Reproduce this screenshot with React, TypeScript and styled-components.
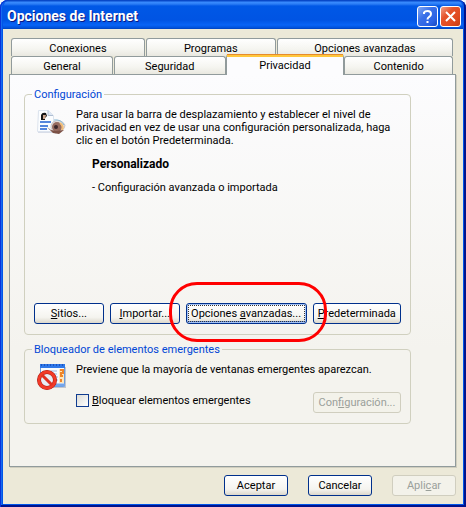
import React, { useState } from "react";
import styled, { createGlobalStyle, css } from "styled-components";

const Global = createGlobalStyle`
  *, *::before, *::after { box-sizing: border-box; }
  body { margin: 0; background: #f4f6fb; font: 11px/13px Roboto, "Liberation Sans", Arial, sans-serif; color: #000; }
  button, input { font: inherit; color: inherit; }
  p, h1, h2 { margin: 0; font-size: inherit; }
`;

const Dialog = styled.main`
  display: flex;
  flex-direction: column;
  min-height: 100vh;
  padding: 0 3px 3px;
  border-radius: 8px 8px 0 0;
  background: #0055e8;
  box-shadow: inset 1px 0 #0831d9, inset -2px -2px #00138c, inset 0 1px #0a3fc4, inset 2px 0 #166aee;
`;

const TitleBar = styled.header`
  display: flex;
  align-items: center;
  gap: 2px;
  height: 29px;
  padding: 3px 2px 0 4px;
  background: linear-gradient(#0848c8 0, #0848c8 1px, #3a8cff 2px, #2b7df5 4px, #0058e6 6px, #0054e3 20px, #0864f6 25px, #0050d8 28px, #0040b8);
  border-radius: 8px 8px 0 0;
`;

const Title = styled.h1`
  flex: 1;
  font: bold 14px/18px Roboto, sans-serif;
  color: #fff;
  text-shadow: 1px 1px #0a1883;
`;

const CaptionButton = styled.button<{ $close?: boolean }>`
  display: grid;
  place-items: center;
  width: 21px;
  height: 21px;
  padding: 0;
  border: 1px solid #fff;
  border-radius: 3px;
  background: ${(p) =>
    p.$close
      ? "linear-gradient(135deg, #f0a08a, #e5532b 35%, #e04a20 70%, #c63c12)"
      : "linear-gradient(135deg, #82a8f4, #3a70e8 40%, #2c62e4 75%, #1748c0)"};
`;

const Content = styled.div`
  flex: 1;
  padding: 9px 7px 8px 6px;
  background: #ece9d8;
`;

const TabRow = styled.div`
  display: flex;
  gap: 1px;
  height: 18px;
  padding: 0 3px 0 2px;
`;

const Tab = styled.button<{ $grow: number; $active?: boolean }>`
  flex: ${(p) => p.$grow} 1 0;
  padding: 1px 0 0;
  border: 1px solid #919b9c;
  border-bottom: 0;
  border-radius: 3px 3px 0 0;
  background: linear-gradient(#fff, #f5f5f0 60%, #e9e8e0);
  ${(p) =>
    p.$active &&
    css`
      position: relative;
      z-index: 1;
      height: 21px;
      margin: -2px -1px -1px;
      padding-bottom: 3px;
      border-top: 3px solid #ffc73c;
      background: #fcfcfe;
      &::before {
        content: "";
        position: absolute;
        inset: -3px 0 auto;
        border-top: 1px solid #e68b2c;
      }
    `}
`;

const Panel = styled.section`
  display: flex;
  flex-direction: column;
  gap: 8px;
  height: 393px;
  padding: 13px 44px 0 14px;
  border: 1px solid #919b9c;
  background: linear-gradient(#fcfcfe, #f4f3ee 70%);
  box-shadow: 1px 1px #d0cebf;
`;

const Group = styled.fieldset`
  display: flex;
  flex-direction: column;
  min-width: 0;
  margin: 0;
  padding: 7px 9px 10px;
  border: 1px solid #d0d0bf;
  border-radius: 4px;
  legend {
    margin-left: -2px;
    padding: 0 2px;
    color: #0046d5;
  }
`;

const Intro = styled.div`
  display: flex;
  gap: 10px;
  svg { flex: none; }
`;

const Settings = styled.div`
  display: flex;
  flex-direction: column;
  gap: 10px;
  height: 145px;
  margin: 11px 0 0 58px;
  h2 { font-size: 12px; }
`;

const ButtonBar = styled.div`
  display: flex;
  gap: 6px;
`;

const Ringed = styled.div`
  position: relative;
  flex: 123 1 0;
  display: flex;
  &::after {
    content: "";
    position: absolute;
    inset: -21px -20px -18px -17px;
    border: 3px solid #f00;
    border-radius: 28px;
    pointer-events: none;
    z-index: 1;
  }
`;

const Button = styled.button<{ $grow?: number; $width?: number; $default?: boolean }>`
  ${(p) => (p.$grow ? `flex: ${p.$grow} 1 0;` : `width: ${p.$width}px;`)}
  min-width: 0;
  height: 21px;
  padding: 0;
  white-space: nowrap;
  border: 1px solid #00308c;
  border-radius: 3px;
  background: linear-gradient(#fff, #f5f4ef 70%, #dcd8cc);
  ${(p) =>
    p.$default &&
    css`
      box-shadow: inset 0 0 0 1px #a5c3f5, inset 0 -2px #6a94e0;
      outline: 1px dotted #333;
      outline-offset: -3px;
    `}
  &:disabled {
    border-color: #d0cebf;
    background: #f3f2ea;
    color: #9aa09a;
  }
`;

const BlockerRow = styled.div`
  display: flex;
  align-items: flex-start;
  justify-content: space-between;
  margin-left: 42px;
`;

const Check = styled.label`
  display: flex;
  align-items: center;
  gap: 3px;
  margin-top: 2px;
  input {
    appearance: none;
    width: 13px;
    height: 13px;
    margin: 0;
    border: 1px solid #103c90;
    background: linear-gradient(135deg, #dcdcd7, #fff);
  }
  input:checked { background: #21a121; }
`;

const Footer = styled.footer`
  display: flex;
  justify-content: flex-end;
  gap: 20px;
  margin-top: 8px;
`;

const PrivacyIcon = () => (
  <svg width="32" height="28" viewBox="0 0 32 28" aria-hidden="true">
    <path d="M4 3h11l5 5v17H4z" fill="#d8dde8" />
    <path d="M4.500 2.500h10l5 5v16h-16z" fill="#fbfdff" stroke="#dde4ee" />
    <path d="M14 2.500v5h5" fill="#dce6f3" stroke="#b0bed2" />
    <path d="M7 12V7q1-3 5-2l1 3-2 2v2z" fill="#151515" />
    <path d="M9 7h3l-1 4H9z" fill="#c9a48c" />
    <path d="M6 14h11M6 18h8M6 21h7" stroke="#5686dc" strokeWidth="2" />
    <path d="M19 14q8-4 12 3 0 6-10 8-7-5-2-11z" fill="#e8e3e2" stroke="#c9c5c8" />
    <path d="M20 12q7-1 10 5" fill="none" stroke="#8ab9d5" />
    <circle cx="23" cy="19" r="5" fill="#966b60" />
    <circle cx="22" cy="19" r="2" fill="#39262b" />
    <path d="M26 15q4 3 2 7" stroke="#f1bb74" strokeWidth="2" fill="none" />
    <path d="M13 19l4 3 5 1 8-1-5 4-6-1z" fill="#7c5146" />
  </svg>
);

const BlockIcon = () => (
  <svg width="32" height="29" viewBox="0 0 32 29" aria-hidden="true">
    <path d="M8 4h25v21H8z" fill="#c3c6cc" />
    <rect x="6.500" y="1.500" width="24" height="22" rx="1" fill="#f7fbff" stroke="#6a9bdc" />
    <path d="M6 3h25" stroke="#2f78e8" strokeWidth="4" />
    <path d="M7 2h23" stroke="#082f9a" strokeDasharray="1 2" />
    <path d="M17 8h6M20 11h3M21 14h3M21 17h3" stroke="#9ab9e5" />
    <rect x="25" y="6" width="5" height="14" fill="#ffe7bd" />
    <path d="M26 7h3v3h-2v3h2m-2 3v3" stroke="#ef862a" strokeWidth="2" fill="none" />
    <path d="M20 22h11" stroke="#75a5ea" strokeWidth="3" />
    <circle cx="13" cy="17" r="8" fill="#e8edf5" stroke="#a51a12" strokeWidth="4" />
    <circle cx="13" cy="17" r="8" fill="none" stroke="#f23a28" strokeWidth="3" />
    <path d="M8 12l10 10" stroke="#e03022" strokeWidth="3" />
  </svg>
);

export default function App() {
  const [blocked, setBlocked] = useState(false);
  return (
    <>
      <Global />
      <Dialog>
        <TitleBar>
          <Title>Opciones de Internet</Title>
          <CaptionButton aria-label="Ayuda">
            <svg width="15" height="15" viewBox="0 0 15 15" aria-hidden="true">
              <path d="M4 5V3.500Q5 2 7.500 2 11 2 11 5q0 2-2 3-1.500 1-1.500 2.500M7.500 12v2" fill="none" stroke="#fff" strokeWidth="2" />
            </svg>
          </CaptionButton>
          <CaptionButton $close aria-label="Cerrar">
            <svg width="15" height="15" viewBox="0 0 15 15" aria-hidden="true">
              <path d="M3 3l9 9M12 3l-9 9" stroke="#fff" strokeWidth="2" />
            </svg>
          </CaptionButton>
        </TitleBar>
        <Content>
          <TabRow>
            <Tab $grow={134}>Conexiones</Tab>
            <Tab $grow={130}>Programas</Tab>
            <Tab $grow={177}>Opciones avanzadas</Tab>
          </TabRow>
          <TabRow>
            <Tab $grow={102}>General</Tab>
            <Tab $grow={112}>Seguridad</Tab>
            <Tab $grow={119} $active>Privacidad</Tab>
            <Tab $grow={109}>Contenido</Tab>
          </TabRow>
          <Panel>
            <Group>
              <legend>Configuración</legend>
              <Intro>
                <PrivacyIcon />
                <p>
                  Para usar la barra de desplazamiento y establecer el nivel de<br />
                  privacidad en vez de usar una configuración personalizada, haga<br />
                  clic en el botón Predeterminada.
                </p>
              </Intro>
              <Settings>
                <h2>Personalizado</h2>
                <p>- Configuración avanzada o importada</p>
              </Settings>
              <ButtonBar>
                <Button $grow={69}><u>S</u>itios...</Button>
                <Button $grow={69}><u>I</u>mportar...</Button>
                <Ringed>
                  <Button $grow={1} $default>Opciones <u>a</u>vanzadas...</Button>
                </Ringed>
                <Button $grow={88}><u>P</u>redeterminada</Button>
              </ButtonBar>
            </Group>
            <Group>
              <legend>Bloqueador de elementos emergentes</legend>
              <Intro>
                <BlockIcon />
                <p>Previene que la mayoría de ventanas emergentes aparezcan.</p>
              </Intro>
              <BlockerRow>
                <Check>
                  <input type="checkbox" checked={blocked} onChange={(e) => setBlocked(e.target.checked)} />
                  <span><u>B</u>loquear elementos emergentes</span>
                </Check>
                <Button $width={88} disabled>Con<u>f</u>iguración...</Button>
              </BlockerRow>
            </Group>
          </Panel>
          <Footer>
            <Button $width={64}>Aceptar</Button>
            <Button $width={64}>Cancelar</Button>
            <Button $width={64} disabled>Apli<u>c</u>ar</Button>
          </Footer>
        </Content>
      </Dialog>
    </>
  );
}
